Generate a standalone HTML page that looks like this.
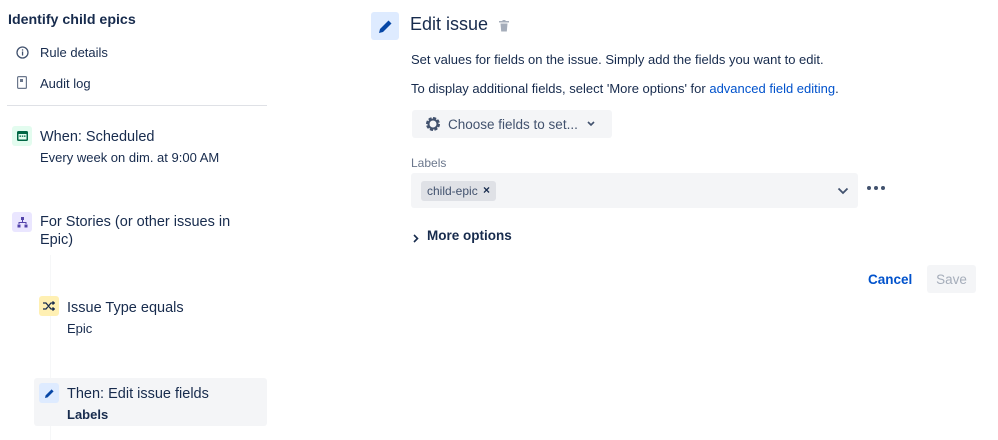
<!DOCTYPE html>
<html><head><meta charset="utf-8"><style>
*{box-sizing:border-box;margin:0;padding:0}
body{width:998px;height:440px;background:#fff;font-family:"Liberation Sans",sans-serif;color:#172b4d;position:relative;overflow:hidden}
.a{position:absolute;white-space:nowrap}
.ib{position:absolute;width:20px;height:20px;border-radius:3px;display:flex;align-items:center;justify-content:center}
</style></head><body>
<div class="a" style="left:8px;top:12px;font-size:14.2px;font-weight:bold">Identify child epics</div>
<svg class="a" style="left:16px;top:46px" width="13" height="13" viewBox="0 0 13 13"><circle cx="6.5" cy="6.5" r="5.5" fill="none" stroke="#42526e" stroke-width="1.3"/><rect x="5.9" y="5.5" width="1.3" height="4" fill="#42526e"/><rect x="5.9" y="3.3" width="1.3" height="1.3" fill="#42526e"/></svg>
<div class="a" style="left:40px;top:45px;font-size:13px">Rule details</div>
<svg class="a" style="left:17px;top:76px" width="10" height="13" viewBox="0 0 10 13"><rect x="0.6" y="0.6" width="8.8" height="11.8" rx="1" fill="none" stroke="#6b778c" stroke-width="1.2"/><rect x="3" y="3" width="3" height="3" fill="#6b778c"/></svg>
<div class="a" style="left:40px;top:76px;font-size:13px">Audit log</div>
<div class="a" style="left:7px;top:105px;width:260px;height:1px;background:#dfe1e6"></div>
<div class="a" style="left:50px;top:255px;width:1px;height:185px;background:#f6f7f8"></div>

<div class="ib" style="left:12px;top:126px;background:#e3fcef"><svg width="11" height="10" viewBox="0 0 11 10"><rect x="0" y="0" width="11" height="10" rx="1.5" fill="#006644"/><rect x="1.5" y="3" width="8" height="5.5" fill="#e3fcef"/><rect x="2.5" y="4.5" width="1.5" height="1.3" fill="#006644"/><rect x="4.8" y="4.5" width="1.5" height="1.3" fill="#006644"/><rect x="7" y="4.5" width="1.5" height="1.3" fill="#006644"/></svg></div>
<div class="a" style="left:40px;top:129px;font-size:14.5px">When: Scheduled</div>
<div class="a" style="left:40px;top:150px;font-size:13px">Every week on dim. at 9:00 AM</div>

<div class="ib" style="left:12px;top:212px;background:#eae6ff"><svg width="11" height="11" viewBox="0 0 11 11" fill="#5243aa"><rect x="4" y="0" width="3" height="3"/><rect x="5" y="3" width="1" height="2.5"/><rect x="1.5" y="5" width="8" height="1"/><rect x="1.5" y="5" width="1" height="2"/><rect x="8.5" y="5" width="1" height="2"/><rect x="0.5" y="7.5" width="3" height="3"/><rect x="7.5" y="7.5" width="3" height="3"/></svg></div>
<div class="a" style="left:40px;top:213px;font-size:14.5px;line-height:18px;white-space:normal;width:200px">For Stories (or other issues in Epic)</div>

<div class="ib" style="left:39px;top:296px;background:#fff0b3"><svg width="12" height="10" viewBox="0 0 12 10" fill="none" stroke="#172b4d" stroke-width="1.3"><path d="M0 2h3l5 6h3M0 8h3l5-6h3M9.5 0.5l1.8 1.5-1.8 1.5M9.5 6.5l1.8 1.5-1.8 1.5"/></svg></div>
<div class="a" style="left:67px;top:300px;font-size:14.5px">Issue Type equals</div>
<div class="a" style="left:67px;top:321px;font-size:13px">Epic</div>

<div class="a" style="left:34px;top:378px;width:233px;height:48px;background:#f4f5f7;border-radius:3px"></div>
<div class="ib" style="left:39px;top:383px;background:#deebff"><svg width="11" height="11" viewBox="0 0 11 11"><path d="M1 10l0.6-2.6 6-6 2 2-6 6z" fill="#0747a6"/></svg></div>
<div class="a" style="left:67px;top:386px;font-size:14.5px">Then: Edit issue fields</div>
<div class="a" style="left:67px;top:407px;font-size:13px;font-weight:bold">Labels</div>

<div class="a" style="left:371px;top:12px;width:28px;height:28px;background:#deebff;border-radius:3px;display:flex;align-items:center;justify-content:center"><svg width="15" height="15" viewBox="0 0 15 15"><path d="M1 14l1-4 8.5-8.5 3 3L5 13z" fill="#0747a6"/></svg></div>
<div class="a" style="left:410px;top:14px;font-size:18px">Edit issue</div>
<svg class="a" style="left:499px;top:20px" width="10" height="12" viewBox="0 0 10 12" fill="#a5adba"><rect x="0" y="1" width="10" height="1.5"/><rect x="3.5" y="0" width="3" height="1.5"/><path d="M1.5 3.5h7l-0.7 8h-5.6z"/></svg>
<div class="a" style="left:411px;top:52px;font-size:13px">Set values for fields on the issue. Simply add the fields you want to edit.</div>
<div class="a" style="left:411px;top:81px;font-size:13px">To display additional fields, select 'More options' for <span style="color:#0052cc">advanced field editing</span>.</div>

<div class="a" style="left:412px;top:110px;width:200px;height:28px;background:#f4f5f7;border-radius:3px"></div>
<svg class="a" style="left:424px;top:115px" width="18" height="18" viewBox="0 0 18 18"><circle cx="9" cy="9" r="5.5" fill="none" stroke="#42526e" stroke-width="3" stroke-dasharray="2.9 1.4"/><circle cx="9" cy="9" r="4.5" fill="none" stroke="#42526e" stroke-width="2"/></svg>
<div class="a" style="left:448px;top:117px;font-size:13.5px;color:#42526e">Choose fields to set...</div>
<svg class="a" style="left:587px;top:121px" width="8" height="6" viewBox="0 0 8 6"><path d="M1 1l3 3 3-3" fill="none" stroke="#42526e" stroke-width="1.6"/></svg>

<div class="a" style="left:411px;top:156px;font-size:12px;color:#6b778c">Labels</div>
<div class="a" style="left:411px;top:173px;width:447px;height:35px;background:#f4f5f7;border-radius:3px"></div>
<div class="a" style="left:421px;top:181px;width:75px;height:20px;background:#dfe1e6;border-radius:3px"></div>
<div class="a" style="left:427px;top:184px;font-size:12px;color:#42526e">child-epic</div>
<div class="a" style="left:483px;top:183px;font-size:12px;font-weight:bold">×</div>
<svg class="a" style="left:837px;top:187px" width="12" height="8" viewBox="0 0 12 8"><path d="M1.5 1.5l4.5 4.5 4.5-4.5" fill="none" stroke="#42526e" stroke-width="1.8"/></svg>
<svg class="a" style="left:866px;top:185px" width="20" height="6" viewBox="0 0 20 6" fill="#42526e"><circle cx="3" cy="3" r="2"/><circle cx="10" cy="3" r="2"/><circle cx="17" cy="3" r="2"/></svg>

<svg class="a" style="left:413px;top:234px" width="6" height="9" viewBox="0 0 6 9"><path d="M1 1l3.5 3.5L1 8" fill="none" stroke="#172b4d" stroke-width="1.6"/></svg>
<div class="a" style="left:427px;top:228px;font-size:13.5px;font-weight:bold;color:#172b4d">More options</div>

<div class="a" style="left:868px;top:272px;font-size:13.5px;font-weight:bold;color:#0052cc">Cancel</div>
<div class="a" style="left:927px;top:265px;width:49px;height:28px;background:#f4f5f7;border-radius:3px;color:#a5adba;font-size:13.5px;display:flex;align-items:center;justify-content:center">Save</div>
</body></html>
